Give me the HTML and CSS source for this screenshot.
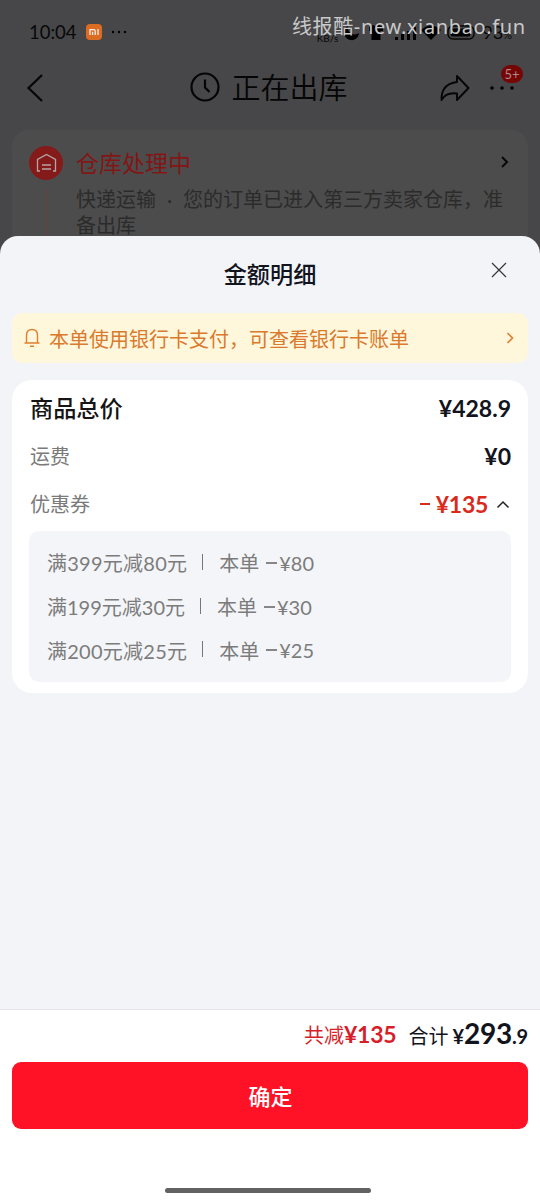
FILE: index.html
```html
<!DOCTYPE html>
<html lang="zh-CN">
<head>
<meta charset="utf-8">
<title>金额明细</title>
<link rel="stylesheet" href="styles.css">
</head>
<body>
<div class="screen">
  <div class="backdrop">
    <div class="status">
      <span class="time">10:04</span>
      <svg class="mi" viewBox="0 0 16 16" width="16" height="16"><rect width="16" height="16" rx="4" fill="#dc6c22"/><path d="M4 11V5.600h3.700q1.500 0 1.500 1.500V11M6.600 7.800V11M12 5V11" fill="none" stroke="#eee" stroke-width="1.300"/></svg>
      <svg class="more-notif" viewBox="0 0 16 4" width="16" height="4"><circle cx="2" cy="2" r="1.200"/><circle cx="8" cy="2" r="1.200"/><circle cx="14" cy="2" r="1.200"/></svg>
      <div class="status-right">
        <span class="rate">KB/s</span>
        <svg width="132" height="20" viewBox="0 0 132 20"><path d="M5 4A7.500 7.500 0 1 0 16 11A7 7 0 0 1 5 4Z"/><path d="M26 5l4-2 3 1.500 3-1.500 4 2v4h-2.500v9h-9V9H26Z"/><path d="M52 15h3v3h-3ZM58 12h3v6h-3ZM64 9h3v9h-3ZM70 5h3v13h-3Z"/><path d="M78 8Q88-1 98 8L88 18Z"/><rect x="105" y="4" width="26" height="13" rx="5" fill="none" stroke="#080808" stroke-width="1.500"/><rect x="107.500" y="6.500" width="20" height="8" rx="2.500"/></svg>
        <span class="percent">93<small>%</small></span>
      </div>
      <span class="watermark">线报酷-new.xianbao.fun</span>
    </div>
    <div class="nav">
      <svg class="back" width="20" height="30" viewBox="0 0 20 30"><path d="M16 2L2.500 15L16 28" fill="none" stroke="#050505" stroke-width="2.200"/></svg>
      <div class="nav-title">
        <svg width="30" height="30" viewBox="0 0 30 30" fill="none" stroke="#050505" stroke-width="2.200"><circle cx="15" cy="15" r="13.500"/><path d="M15 7.500V15.500L19.500 20"/></svg>
        <span>正在出库</span>
      </div>
      <div class="nav-actions">
        <svg width="30" height="28" viewBox="0 0 30 28"><path d="M17 2L28.500 14L17 26V19.500Q6 18 1.500 26Q1 10 17 8Z" fill="none" stroke="#050505" stroke-width="1.900" stroke-linejoin="round"/></svg>
        <div class="more">
          <svg width="26" height="6" viewBox="0 0 26 6"><circle cx="3" cy="3" r="1.800"/><circle cx="13" cy="3" r="1.800"/><circle cx="23" cy="3" r="1.800"/></svg>
          <span class="badge">5+</span>
        </div>
      </div>
    </div>
    <div class="track-card">
      <div class="track-rail">
        <svg width="34" height="34" viewBox="0 0 34 34"><circle cx="17" cy="17" r="17" fill="#851a1a"/><path d="M11 25H8.500V13.500L17.500 8.500L26.500 13.500V25H24M13 19H22M13 23H22" fill="none" stroke="#b5a5a5" stroke-width="1.300"/></svg>
        <i class="rail-line"></i>
      </div>
      <div class="track-body">
        <div class="track-head"><span>仓库处理中</span><svg width="9" height="14" viewBox="0 0 9 14"><path d="M2 2L7 7L2 12" fill="none" stroke="#080808" stroke-width="2"/></svg></div>
        <p class="track-text">快递运输<span class="dot">·</span>您的订单已进入第三方卖家仓库，准备出库</p>
      </div>
    </div>
  </div>

  <section class="sheet">
    <header class="sheet-head">
      <h1>金额明细</h1>
      <svg class="close" width="16" height="16" viewBox="0 0 16 16"><path d="M1 1L15 15M15 1L1 15" stroke="#333438" stroke-width="1.200"/></svg>
    </header>
    <div class="notice">
      <svg width="16" height="20" viewBox="0 0 16 20" fill="none" stroke="#e0802f" stroke-width="1.400"><path d="M2.500 15V7.500Q2.500 1.500 8 1.500T13.500 7.500V15M.5 15H15.500M6 18.300H10"/></svg>
      <span>本单使用银行卡支付，可查看银行卡账单</span>
      <svg class="notice-arrow" width="8" height="12" viewBox="0 0 8 12"><path d="M1.500 1L6.500 6L1.500 11" fill="none" stroke="#e0802f" stroke-width="1.700"/></svg>
    </div>
    <div class="detail">
      <div class="row total"><span>商品总价</span><b>¥428.9</b></div>
      <div class="row ship"><span>运费</span><b>¥0</b></div>
      <div class="row coupon"><span>优惠券</span><b class="red"><i class="minus"></i>¥135<svg width="14" height="9" viewBox="0 0 14 9"><path d="M1.500 7.500L7 2L12.500 7.500" fill="none" stroke="#222" stroke-width="1.500"/></svg></b></div>
      <ul class="coupons">
        <li><span class="rule">满399元减80元</span><i class="sep"></i><span>本单</span><i class="dash"></i><span class="off">¥80</span></li>
        <li><span class="rule narrow">满199元减30元</span><i class="sep"></i><span>本单</span><i class="dash"></i><span class="off">¥30</span></li>
        <li><span class="rule">满200元减25元</span><i class="sep"></i><span>本单</span><i class="dash"></i><span class="off">¥25</span></li>
      </ul>
    </div>
    <footer class="footer">
      <div class="sum"><span class="saved">共减<b>¥135</b></span><span class="pay">合计<b><small class="yen">¥</small>293<small>.9</small></b></span></div>
      <button class="confirm">确定</button>
      <div class="home-bar"></div>
    </footer>
  </section>
</div>
</body>
</html>
```
FILE: styles.css
```css
* { box-sizing: border-box; }
body { margin: 0; font-family: Lato, "Noto Sans CJK SC", sans-serif; }
svg { display: block; flex: none; }
h1, p, ul { margin: 0; padding: 0; }
i { display: block; flex: none; }

.screen { position: relative; width: 540px; height: 1201px; overflow: hidden; background: #474749; color: #080808; }

.status { position: relative; display: flex; align-items: center; height: 64px; padding: 0 28px 0 29px; }
.time { width: 57px; font-size: 18.500px; white-space: nowrap; }
.more-notif { margin-left: 9px; }
.status-right { display: flex; align-items: center; margin-left: auto; height: 24px; }
.rate { align-self: flex-end; font-size: 10px; margin-right: 5px; }
.percent { margin-left: 7px; font-size: 18px; }
.percent small { font-size: 11px; }
.watermark { position: absolute; left: 292px; top: 12px; font: 20px/30px "Noto Sans", "Noto Sans CJK SC", sans-serif; letter-spacing: .620px; color: #c9c9c9; white-space: nowrap; }

.nav { display: grid; grid-template-columns: 1fr auto 1fr; align-items: center; height: 47px; padding: 0 25px 0 26px; }
.nav-title { display: flex; align-items: center; gap: 11px; margin-left: -3px; padding-bottom: 2px; font-family: "Noto Sans CJK SC", sans-serif; font-size: 29px; font-weight: 350; line-height: 40px; color: #050505; }
.nav-title span { padding-bottom: 2px; }
.nav-actions { display: flex; align-items: center; justify-content: flex-end; gap: 19px; }
.more { position: relative; }
.badge { position: absolute; left: 12px; top: -20px; width: 22px; height: 18px; border-radius: 9px; background: #760606; color: #b08a8a; font-size: 13px; line-height: 18px; text-align: center; }

.track-card { display: flex; gap: 13px; height: 140px; margin: 19px 12px 0; padding: 16px 17px; border-radius: 16px; background: #4c4c4c; }
.track-rail { display: flex; flex-direction: column; align-items: center; gap: 7px; width: 34px; }
.rail-line { width: 1px; flex: 1; background: #6a4141; }
.track-body { flex: 1; }
.track-head { display: flex; align-items: center; justify-content: space-between; height: 32px; padding-right: 2px; font-size: 23px; color: #821616; }
.track-text { margin-top: 8px; font-size: 20px; line-height: 26px; color: #2b2b2b; }
.dot { display: inline-block; width: 27px; text-align: center; }

.sheet { position: absolute; left: 0; right: 0; top: 236px; bottom: 0; display: flex; flex-direction: column; border-radius: 18px 18px 0 0; background: #f3f4f8; color: #11131d; overflow: hidden; }
.sheet-head { display: grid; grid-template-columns: 33px 1fr 33px; align-items: center; height: 77px; }
.sheet-head h1 { grid-column: 2; grid-row: 1; font-size: 23.200px; font-weight: 500; line-height: 32px; text-align: center; padding-bottom: 1px; }
.close { grid-column: 2; grid-row: 1; justify-self: end; margin-bottom: 9px; }
.notice { display: flex; align-items: center; gap: 9px; height: 50px; margin: 0 12px; padding: 0 14px 0 12px; border-radius: 10px; background: #fff7dc; color: #d97a2c; font-size: 20px; }
.notice-arrow { margin-left: auto; }

.detail { height: 313px; margin: 17px 12px 0; padding: 4px 17px 0; border-radius: 20px; background: #fff; }
.row { display: flex; align-items: center; justify-content: space-between; height: 48px; padding-left: 1px; font-size: 20px; color: #7a7a7a; }
.row > span { margin-top: -1px; }
.row b { display: flex; align-items: center; font-size: 23px; font-weight: 700; color: #11131d; }
.total { font-size: 23.200px; font-weight: 500; color: #151515; }
.total > span { margin-top: -2px; }
.row .red { color: #da2a1c; }
.minus { width: 10px; height: 2px; margin-right: 6px; background: #da2a1c; }
.red svg { margin: 0 1px 0 8px; }
.red { letter-spacing: -.3px; }
.coupons { display: flex; flex-direction: column; height: 151px; margin-top: 3px; padding: 10px 18px; border-radius: 10px; background: #f4f5f8; list-style: none; font-size: 20px; color: #7c7c7c; }
.coupons li { display: flex; align-items: center; height: 44.300px; }
.rule { letter-spacing: .25px; }
.narrow { letter-spacing: 0; }
.sep { width: 1px; height: 16px; margin: -2px 16px 0 15px; background: #777; }
.dash { width: 11px; height: 2px; margin: 0 2px 0 7px; background: #868686; }

.footer { display: flex; flex-direction: column; height: 192px; margin-top: auto; padding: 0 12px; border-top: 1px solid #e4e5e8; background: #fff; }
.sum { display: flex; align-items: center; justify-content: flex-end; gap: 12px; height: 52px; padding-bottom: 4px; font-size: 20px; }
.saved { display: flex; align-items: baseline; color: #d61f2b; }
.saved b { font-size: 23px; font-weight: 700; letter-spacing: -.2px; }
.pay { display: flex; align-items: baseline; gap: 4px; }
.pay b { font-size: 28px; font-weight: 700; line-height: 30px; letter-spacing: -.200px; }
.pay small { font-size: 20px; }
.confirm { height: 67px; padding: 0 0 2px 1px; border: 0; border-radius: 9px; background: #ff1225; color: #fff; font: 500 22px "Noto Sans CJK SC", sans-serif; }
.home-bar { width: 206px; height: 5px; margin: 59px 0 0 153px; border-radius: 3px; background: #626262; }
```
